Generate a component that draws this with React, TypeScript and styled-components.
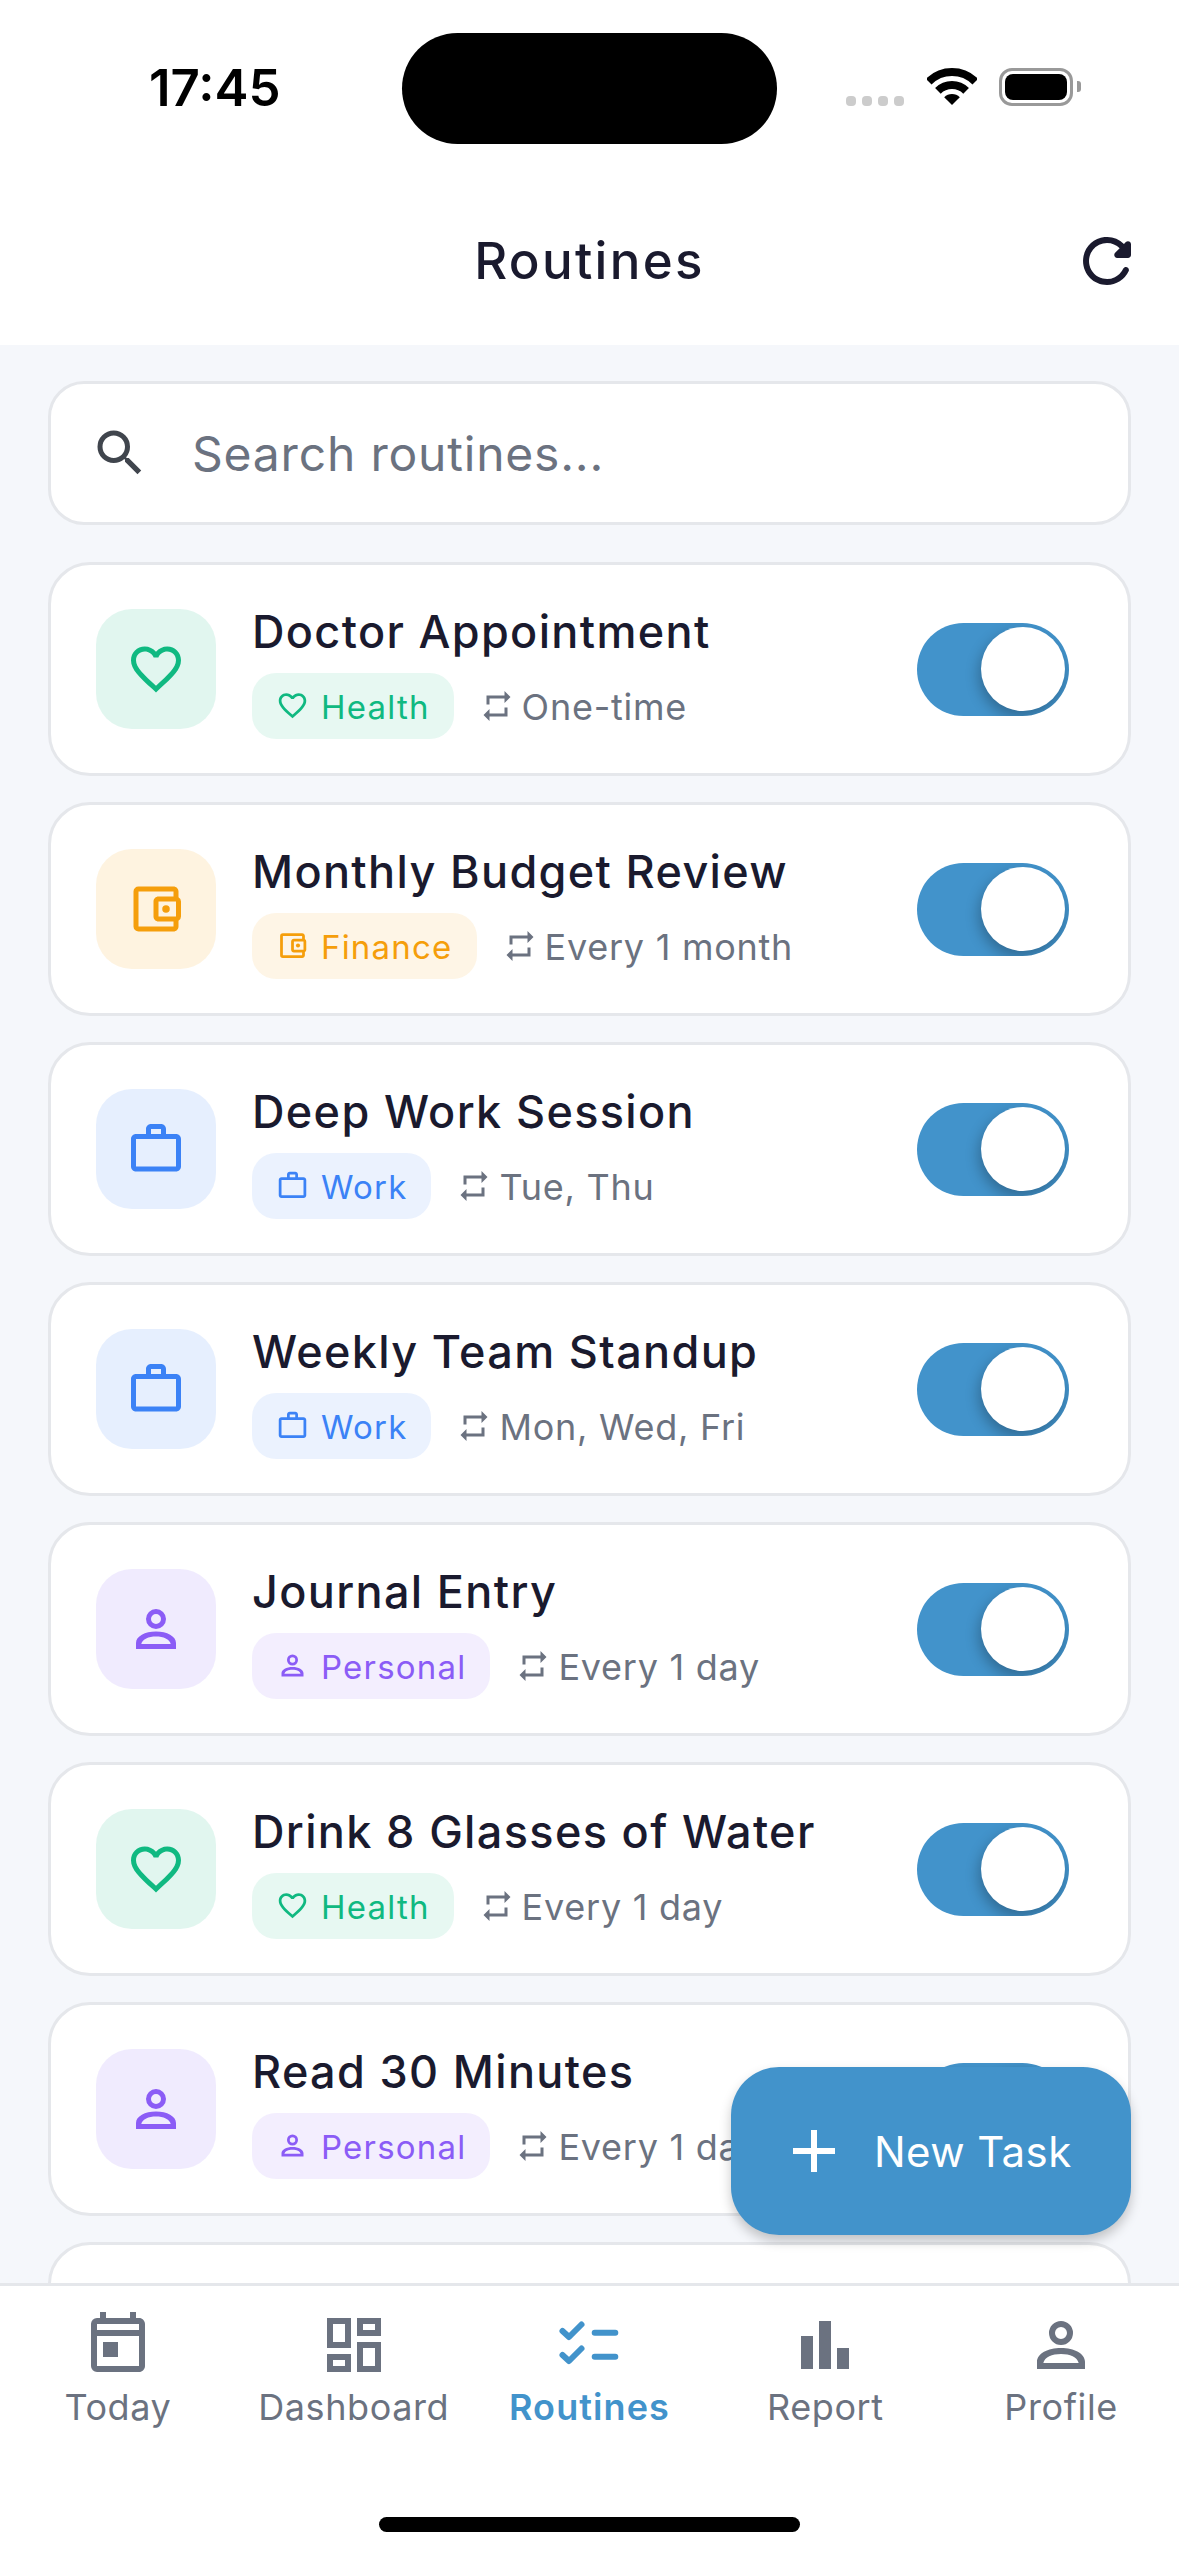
import React from "react";
import styled, { createGlobalStyle } from "styled-components";
import {
  MdFavoriteBorder,
  MdOutlineAccountBalanceWallet,
  MdWorkOutline,
  MdSearch,
  MdRepeat,
  MdAdd,
  MdOutlineToday,
  MdOutlineDashboard,
  MdBarChart,
} from "react-icons/md";

const Global = createGlobalStyle`
  html, body { margin: 0; padding: 0; background: #fff; }
  * { box-sizing: border-box; }
  body { font-family: "Inter", "Liberation Sans", sans-serif; }
`;

const Page = styled.div`
  position: relative;
  width: 1179px;
  height: 2556px;
  display: flex;
  flex-direction: column;
  overflow: hidden;
  background: #f5f7fb;
`;

const StatusBar = styled.div`
  display: grid;
  grid-template-columns: 402px 375px 402px;
  height: 144px;
  padding-top: 33px;
  background: #fff;
`;
const Clock = styled.div`
  padding-left: 149px;
  font-size: 51px;
  line-height: 110px;
  font-weight: 600;
  color: #000;
`;
const Island = styled.div`
  height: 111px;
  background: #000;
  border-radius: 56px;
`;
const StatusIcons = styled.div`
  display: flex;
  align-items: flex-end;
  height: 73px;
  padding-left: 69px;
`;
const Dots = styled.div`
  display: flex;
  gap: 6px;
  margin-right: 23px;
`;
const Dot = styled.span`
  width: 10px;
  height: 10px;
  border-radius: 4px;
  background: #ccc;
`;
const Battery = styled.div`
  width: 74px;
  height: 38px;
  margin-left: 22px;
  padding: 3px;
  border: 3px solid #999;
  border-radius: 13px;
  background: #fff;
`;
const BatteryFill = styled.div`
  width: 100%;
  height: 100%;
  border-radius: 8px;
  background: #000;
`;
const BatteryNub = styled.div`
  width: 4px;
  height: 11px;
  margin: 0 0 14px 4px;
  border-radius: 0 3px 3px 0;
  background: #999;
`;

const AppBar = styled.header`
  display: grid;
  grid-template-columns: 1fr auto 1fr;
  align-items: center;
  height: 201px;
  padding: 81px 36px 48px;
  background: #fff;
`;
const Title = styled.h1`
  grid-column: 2;
  margin: 0;
  font-size: 51px;
  font-weight: 500;
  letter-spacing: 2.3px;
  line-height: 72px;
  color: #1a1a2e;
`;
const RefreshButton = styled.div`
  justify-self: end;
  display: flex;
  color: #1a1a2e;
`;

const Content = styled.main`
  flex: 1;
  min-height: 0;
  overflow: hidden;
  padding: 36px 48px 0;
  display: flex;
  flex-direction: column;
  gap: 26px;
`;
const SearchBox = styled.div`
  display: flex;
  align-items: center;
  flex: none;
  height: 144px;
  margin-bottom: 11px;
  padding: 0 39px;
  background: #fff;
  border: 3px solid #e5e7eb;
  border-radius: 36px;
  color: #40454d;
`;
const SearchText = styled.span`
  margin-left: 42px;
  font-size: 48px;
  letter-spacing: 0.8px;
  color: #6b7280;
`;

const Card = styled.article`
  display: flex;
  align-items: center;
  flex: none;
  height: 214px;
  padding: 0 59px 0 45px;
  background: #fff;
  border: 3px solid #e5e7eb;
  border-radius: 42px;
`;
const IconBox = styled.div<{ $c: string }>`
  display: flex;
  align-items: center;
  justify-content: center;
  flex: none;
  width: 120px;
  height: 120px;
  border-radius: 36px;
  color: ${(p) => p.$c};
  background: ${(p) => p.$c}20;
`;
const Info = styled.div`
  flex: 1;
  min-width: 0;
  margin-left: 36px;
`;
const Name = styled.div`
  margin-bottom: 9px;
  font-size: 45px;
  line-height: 64px;
  font-weight: 500;
  letter-spacing: 1.35px;
  color: #1a1a2e;
  white-space: nowrap;
`;
const Meta = styled.div`
  display: flex;
  align-items: center;
`;
const Badge = styled.div<{ $c: string }>`
  display: flex;
  align-items: center;
  gap: 12px;
  height: 66px;
  padding: 0 24px;
  border-radius: 24px;
  font-size: 33px;
  line-height: 66px;
  letter-spacing: 1.2px;
  color: ${(p) => p.$c};
  background: ${(p) => p.$c}1a;
`;
const BadgeLabel = styled.span`
  padding-top: 2px;
`;
const Schedule = styled.div`
  display: flex;
  align-items: center;
  gap: 7px;
  margin-left: 25px;
  font-size: 36px;
  letter-spacing: 0.75px;
  color: #6b7280;
  white-space: nowrap;
`;
const ScheduleLabel = styled.span`
  padding-top: 2px;
`;
const Toggle = styled.div`
  flex: none;
  display: flex;
  justify-content: flex-end;
  align-items: center;
  width: 152px;
  height: 93px;
  padding-right: 4px;
  overflow: hidden;
  border-radius: 47px;
  background: #4293cb;
`;
const Knob = styled.div`
  width: 84px;
  height: 84px;
  border-radius: 50%;
  background: #fff;
  box-shadow: -2px 6px 14px rgba(0, 0, 0, 0.28);
`;

const Fab = styled.button`
  position: absolute;
  left: 731px;
  top: 2067px;
  display: flex;
  align-items: center;
  gap: 24px;
  width: 400px;
  height: 168px;
  padding: 0 0 0 47px;
  border: 0;
  border-radius: 48px;
  color: #fff;
  background: #4293cb;
  box-shadow: 0 6px 12px rgba(0, 0, 0, 0.22);
  font-family: inherit;
  font-size: 42px;
  letter-spacing: 0.4px;
`;

const Footer = styled.footer`
  flex: none;
  height: 273px;
  background: #fff;
  border-top: 3px solid #e5e7eb;
`;
const Tabs = styled.nav`
  display: grid;
  grid-template-columns: repeat(5, 1fr);
  padding-top: 23px;
`;
const Tab = styled.div<{ $active?: boolean }>`
  display: flex;
  flex-direction: column;
  align-items: center;
  font-size: 36px;
  line-height: 52px;
  letter-spacing: ${(p) => (p.$active ? "1.1px" : "0.6px")};
  font-weight: ${(p) => (p.$active ? 600 : 400)};
  color: ${(p) => (p.$active ? "#4293cb" : "#6b7280")};
`;
const HomeBar = styled.div`
  width: 421px;
  height: 15px;
  margin: 84px auto 0;
  border-radius: 8px;
  background: #000;
`;

const Person = ({ size }: { size: number }) => (
  <svg width={size} height={size} viewBox="0 0 24 24" fill="currentColor">
    <path
      fillRule="evenodd"
      d="M12 4a4 4 0 1 1 0 8 4 4 0 0 1 0-8zm0 2a2 2 0 1 0 0 4 2 2 0 0 0 0-4zM12 13c-4.4 0-8 1.9-8 4.6V20h16v-2.4C20 14.9 16.4 13 12 13zm0 2c3 0 5.4 1 5.9 3H6.1c.5-2 2.9-3 5.9-3z"
    />
  </svg>
);

const Refresh = () => (
  <svg width={72} height={72} viewBox="0 0 24 24" fill="currentColor">
    <path d="M17.65 6.35a7.95 7.95 0 0 0-6.48-2.31c-3.67.37-6.69 3.35-7.1 7.02C3.52 15.91 7.27 20 12 20a7.98 7.98 0 0 0 7.21-4.56c.32-.67-.16-1.44-.9-1.44-.37 0-.72.2-.88.53a5.994 5.994 0 0 1-6.8 3.31c-2.22-.49-4.01-2.3-4.48-4.52A6.002 6.002 0 0 1 12 6c1.66 0 3.14.69 4.22 1.78l-1.51 1.51c-.63.63-.19 1.71.7 1.71H19c.55 0 1-.45 1-1V6.41c0-.89-1.08-1.34-1.71-.71l-.64.65z" />
  </svg>
);

const Wifi = () => (
  <svg width={50} height={38} viewBox="0 0 50 38" fill="none" stroke="#000">
    <path d="M1.7 13.7A33 33 0 0 1 48.3 13.7" strokeWidth={8} />
    <path d="M10.9 22.9A20 20 0 0 1 39.1 22.9" strokeWidth={8} />
    <path d="M25 37L17.2 29.2A11 11 0 0 1 32.8 29.2Z" fill="#000" stroke="none" />
  </svg>
);

const Checklist = () => (
  <svg width={72} height={72} viewBox="0 0 72 72" fill="none" stroke="currentColor" strokeWidth={6} strokeLinecap="round" strokeLinejoin="round">
    <path d="M9.5 22L16 28L28.5 15.5M9.5 46L16 52L28.5 39.5" />
    <path d="M41.7 23.7H62.3M41.7 47.7H62.3" />
  </svg>
);

const kinds = {
  health: { label: "Health", color: "#10b981", Icon: MdFavoriteBorder },
  finance: { label: "Finance", color: "#f59e0b", Icon: MdOutlineAccountBalanceWallet },
  work: { label: "Work", color: "#3b82f6", Icon: MdWorkOutline },
  personal: { label: "Personal", color: "#8b5cf6", Icon: Person },
};

const routines: { name: string; kind: keyof typeof kinds; when: string }[] = [
  { name: "Doctor Appointment", kind: "health", when: "One-time" },
  { name: "Monthly Budget Review", kind: "finance", when: "Every 1 month" },
  { name: "Deep Work Session", kind: "work", when: "Tue, Thu" },
  { name: "Weekly Team Standup", kind: "work", when: "Mon, Wed, Fri" },
  { name: "Journal Entry", kind: "personal", when: "Every 1 day" },
  { name: "Drink 8 Glasses of Water", kind: "health", when: "Every 1 day" },
  { name: "Read 30 Minutes", kind: "personal", when: "Every 1 day" },
];

export default function App() {
  return (
    <Page>
      <Global />
      <StatusBar>
        <Clock>17:45</Clock>
        <Island />
        <StatusIcons>
          <Dots>
            <Dot />
            <Dot />
            <Dot />
            <Dot />
          </Dots>
          <Wifi />
          <Battery>
            <BatteryFill />
          </Battery>
          <BatteryNub />
        </StatusIcons>
      </StatusBar>
      <AppBar>
        <Title>Routines</Title>
        <RefreshButton>
          <Refresh />
        </RefreshButton>
      </AppBar>
      <Content>
        <SearchBox>
          <MdSearch size={60} />
          <SearchText>Search routines...</SearchText>
        </SearchBox>
        {routines.map((r) => {
          const k = kinds[r.kind];
          return (
            <Card key={r.name}>
              <IconBox $c={k.color}>
                <k.Icon size={60} />
              </IconBox>
              <Info>
                <Name>{r.name}</Name>
                <Meta>
                  <Badge $c={k.color}>
                    <k.Icon size={33} />
                    <BadgeLabel>{k.label}</BadgeLabel>
                  </Badge>
                  <Schedule>
                    <MdRepeat size={36} />
                    <ScheduleLabel>{r.when}</ScheduleLabel>
                  </Schedule>
                </Meta>
              </Info>
              <Toggle>
                <Knob />
              </Toggle>
            </Card>
          );
        })}
        <Card />
      </Content>
      <Fab>
        <MdAdd size={72} />
        New Task
      </Fab>
      <Footer>
        <Tabs>
          <Tab>
            <MdOutlineToday size={72} />
            Today
          </Tab>
          <Tab>
            <MdOutlineDashboard size={72} />
            Dashboard
          </Tab>
          <Tab $active>
            <Checklist />
            Routines
          </Tab>
          <Tab>
            <MdBarChart size={72} />
            Report
          </Tab>
          <Tab>
            <Person size={72} />
            Profile
          </Tab>
        </Tabs>
        <HomeBar />
      </Footer>
    </Page>
  );
}
